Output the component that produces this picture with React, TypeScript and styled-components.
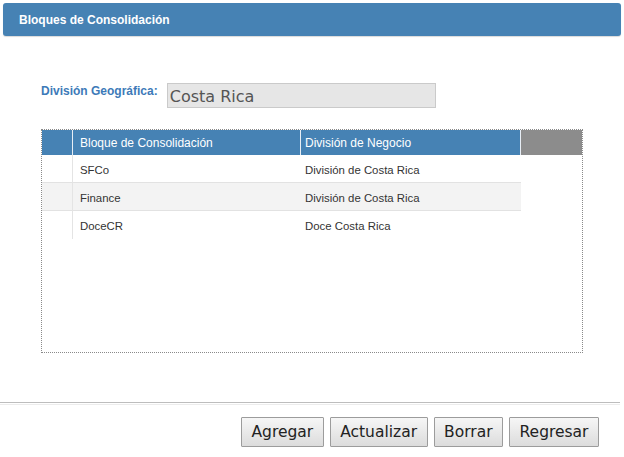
import React from "react";
import styled, { createGlobalStyle } from "styled-components";

const Global = createGlobalStyle`
  html, body { margin: 0; padding: 0; background: #fff; }
  body { width: 624px; height: 457px; overflow: hidden; }
`;

const Page = styled.div`
  width: 624px;
  box-sizing: border-box;
  padding-top: 3px;
  display: flex;
  flex-direction: column;
`;

const TitleBar = styled.div`
  margin: 0 3px;
  height: 33px;
  border-radius: 3px;
  background: #4682b4;
  box-shadow: 0 1px 1px rgba(0, 0, 0, 0.15);
  display: flex;
  align-items: center;
  padding-left: 16px;
  padding-top: 1px;
  box-sizing: border-box;
  color: #fff;
  font-family: "Liberation Sans", Arial, sans-serif;
  font-weight: bold;
  font-size: 12px;
`;

const FilterRow = styled.div`
  display: flex;
  align-items: flex-start;
  gap: 9px;
  margin-top: 47px;
  padding-left: 41px;
`;

const FilterLabel = styled.label`
  margin-top: 1px;
  color: #3d7ab8;
  font-family: "Liberation Sans", Arial, sans-serif;
  font-weight: bold;
  font-size: 12px;
`;

const ReadOnlyInput = styled.input`
  box-sizing: border-box;
  width: 269px;
  height: 25px;
  margin: 0;
  padding: 2px 2px 0;
  border: 1px solid #cacaca;
  background: #e6e6e6;
  color: #555;
  font-family: "DejaVu Sans", sans-serif;
  font-size: 16px;
  outline: none;
`;

const GridFrame = styled.div`
  box-sizing: border-box;
  margin: 21px 0 0 41px;
  width: 542px;
  height: 224px;
  border: 1px dotted #8a8a8a;
  display: grid;
  grid-template-columns: 31px 228px 220px 61px;
  grid-auto-rows: 28px;
  grid-template-rows: 25px;
  align-content: start;
`;

const HeadCell = styled.div<{ $filler?: boolean; $pad?: number }>`
  box-sizing: border-box;
  background: ${(p) => (p.$filler ? "#8c8c8c" : "#4682b4")};
  border-right: ${(p) => (p.$filler ? "none" : "1px solid #e8eef5")};
  color: #fff;
  font-family: "Liberation Sans", Arial, sans-serif;
  font-size: 12px;
  display: flex;
  align-items: center;
  padding-left: ${(p) => p.$pad ?? 7}px;
  padding-top: 1px;
`;

const BodyCell = styled.div<{ $alt?: boolean; $marker?: boolean; $noLine?: boolean; $pad?: number }>`
  box-sizing: border-box;
  background: ${(p) => (p.$alt ? "#f3f3f3" : "#fff")};
  border-bottom: ${(p) => (p.$noLine ? "none" : "1px solid #e2e2e2")};
  border-right: ${(p) => (p.$marker ? "1px solid #e4e4e4" : "none")};
  color: #333;
  font-family: "Liberation Sans", Arial, sans-serif;
  font-size: 11.4px;
  display: flex;
  align-items: center;
  padding-left: ${(p) => p.$pad ?? 7}px;
  padding-top: 2px;
`;

const Spacer = styled.div``;

const Divider = styled.div`
  margin-top: 49px;
  width: 620px;
  height: 1px;
  border-top: 1px solid #bdbdbd;
  border-bottom: 1px solid #ececec;
`;

const ButtonBar = styled.div`
  display: flex;
  justify-content: flex-end;
  gap: 6px;
  margin-top: 12px;
  padding-right: 25px;
`;

const ActionButton = styled.button`
  box-sizing: border-box;
  height: 30px;
  padding: 0 9.5px;
  margin: 0;
  border: 1px solid #9c9c9c;
  border-radius: 1px;
  background: linear-gradient(#f6f6f6, #dcdcdc);
  color: #222;
  font-family: "DejaVu Sans", sans-serif;
  font-size: 15.5px;
`;

const rows = [
  { bloque: "SFCo", division: "División de Costa Rica" },
  { bloque: "Finance", division: "División de Costa Rica" },
  { bloque: "DoceCR", division: "Doce Costa Rica" },
];

export default function App() {
  return (
    <>
      <Global />
      <Page>
        <TitleBar>Bloques de Consolidación</TitleBar>
        <FilterRow>
          <FilterLabel>División Geográfica:</FilterLabel>
          <ReadOnlyInput readOnly value="Costa Rica" />
        </FilterRow>
        <GridFrame>
          <HeadCell />
          <HeadCell>Bloque de Consolidación</HeadCell>
          <HeadCell $pad={4}>División de Negocio</HeadCell>
          <HeadCell $filler />
          {rows.map((r, i) => {
            const alt = i % 2 === 1;
            const last = i === rows.length - 1;
            return (
              <React.Fragment key={r.bloque}>
                <BodyCell $alt={alt} $marker $noLine={last} />
                <BodyCell $alt={alt} $noLine={last}>{r.bloque}</BodyCell>
                <BodyCell $alt={alt} $noLine={last} $pad={4}>{r.division}</BodyCell>
                <Spacer />
              </React.Fragment>
            );
          })}
        </GridFrame>
        <Divider />
        <ButtonBar>
          <ActionButton>Agregar</ActionButton>
          <ActionButton>Actualizar</ActionButton>
          <ActionButton>Borrar</ActionButton>
          <ActionButton>Regresar</ActionButton>
        </ButtonBar>
      </Page>
    </>
  );
}
